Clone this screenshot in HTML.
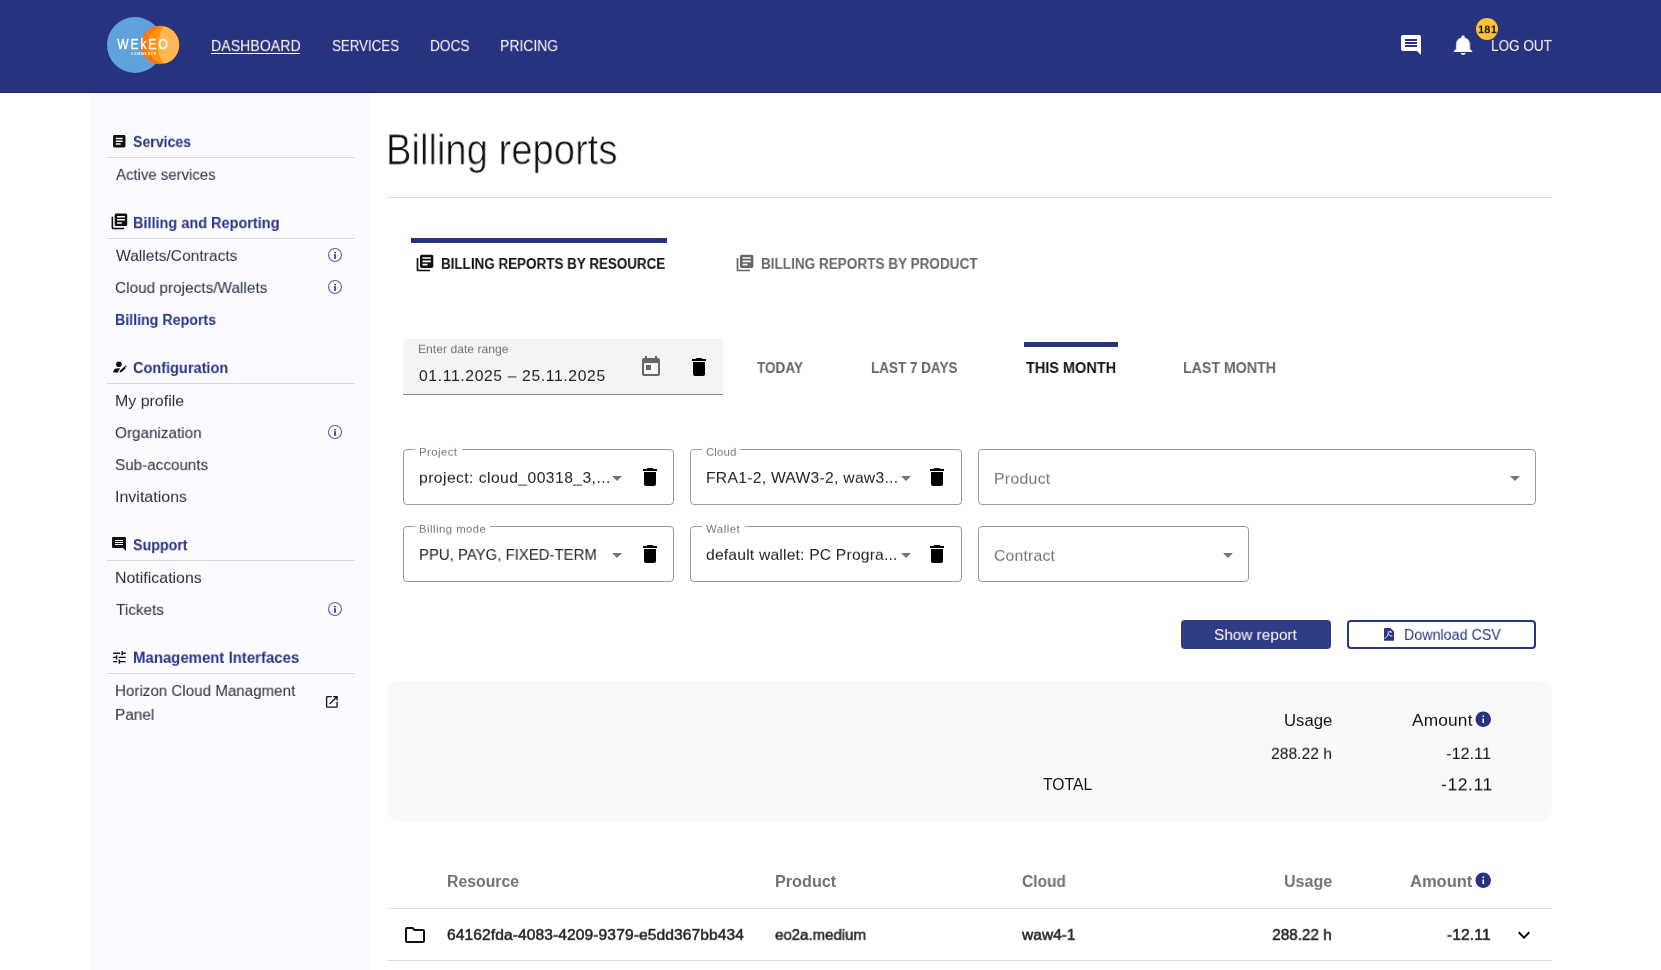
<!DOCTYPE html>
<html><head><meta charset="utf-8"><title>Billing reports</title>
<style>
html,body{margin:0;padding:0;}
body{width:1661px;height:970px;position:relative;overflow:hidden;background:#fff;font-family:"Liberation Sans",sans-serif;}
.t{position:absolute;white-space:nowrap;line-height:1;will-change:transform;}
svg{display:block;will-change:transform;}
</style></head><body>
<div style="position:absolute;left:0px;top:0px;width:1661px;height:92px;background:#27337f;"></div>
<div style="position:absolute;left:0px;top:92px;width:1661px;height:1px;background:#1c2575;"></div>
<svg style="position:absolute;left:100px;top:10px" width="90" height="70" viewBox="0 0 90 70"><defs><clipPath id="oc"><circle cx="60" cy="35" r="19"/></clipPath><linearGradient id="og" x1="0" x2="1" y1="0" y2="0"><stop offset="0" stop-color="#ff8a0c"/><stop offset="1" stop-color="#ffab14"/></linearGradient></defs><circle cx="35" cy="35" r="28" fill="#5fa3dc"/><circle cx="60" cy="35" r="19.3" fill="#ff760f"/><g clip-path="url(#oc)"><circle cx="65" cy="35" r="18.5" fill="url(#og)"/><ellipse cx="74.5" cy="35" rx="17" ry="23" fill="#ffb655"/></g><text transform="translate(43.6,39.4) scale(0.8,1)" text-anchor="middle" font-family="Liberation Sans" font-size="15" fill="#fff" stroke="#fff" stroke-width="0.3" letter-spacing="2.5">WEkEO</text><text x="44" y="45.2" text-anchor="middle" font-family="Liberation Sans" font-weight="700" font-size="3.2" fill="#fff" letter-spacing="0.9">COMMERCE</text></svg>
<div class="t" style="left:210.57px;transform-origin:0 13.00px;top:38.00px;font-size:15.60px;color:#fff;transform:translateY(0.100px) scale(0.9084,0.9333);">DASHBOARD</div>
<div class="t" style="left:332.14px;transform-origin:0 13.00px;top:38.00px;font-size:15.60px;color:#fff;transform:translateY(0.100px) scale(0.8525,0.9333);">SERVICES</div>
<div class="t" style="left:430.31px;transform-origin:0 13.00px;top:38.00px;font-size:15.60px;color:#fff;transform:translateY(0.100px) scale(0.8733,0.9333);">DOCS</div>
<div class="t" style="left:500.38px;transform-origin:0 13.00px;top:38.00px;font-size:15.60px;color:#fff;transform:translateY(0.100px) scale(0.8952,0.9333);">PRICING</div>
<div style="position:absolute;left:211px;top:53px;width:89px;height:1px;background:#fff;"></div>
<svg style="position:absolute;left:1398.6px;top:33px;" width="24" height="24" viewBox="0 0 24 24"><path fill="#fff" d="M21.99 4c0-1.1-.89-2-1.99-2H4c-1.1 0-2 .9-2 2v12c0 1.1.9 2 2 2h14l4 4-.01-18zM18 14H6v-2h12v2zm0-3H6V9h12v2zm0-3H6V6h12v2z"/></svg>
<svg style="position:absolute;left:1451px;top:32.5px;transform:scaleX(1.15);transform-origin:50% 50%;" width="24" height="24" viewBox="0 0 24 24"><path fill="#fff" d="M12 22c1.1 0 2-.9 2-2h-4c0 1.1.89 2 2 2zm6-6v-5c0-3.07-1.64-5.64-4.5-6.32V4c0-.83-.67-1.5-1.5-1.5s-1.5.67-1.5 1.5v.68C7.63 5.36 6 7.92 6 11v5l-2 2v1h16v-1l-2-2z"/></svg>
<div style="position:absolute;left:1476px;top:18px;width:22px;height:22px;border-radius:50%;background:#fcc335;"></div>
<div class="t" style="left:1478.14px;transform-origin:0 9.00px;top:24.00px;font-size:11.05px;font-weight:700;color:#111;transform:translateY(0.200px) scale(1.0000,0.9500);letter-spacing:0.171px;">181</div>
<div class="t" style="left:1491.12px;transform-origin:0 13.00px;top:37.00px;font-size:15.60px;color:#fff;transform:translateY(0.900px) scale(0.8668,0.9167);">LOG OUT</div>
<div style="position:absolute;left:91px;top:94px;width:280px;height:876px;background:#fafaff;"></div>
<svg style="position:absolute;left:110.7px;top:132.7px;" width="16.5" height="16.5" viewBox="0 0 24 24"><path fill="#111" d="M19 3H5c-1.1 0-2 .9-2 2v14c0 1.1.9 2 2 2h14c1.1 0 2-.9 2-2V5c0-1.1-.9-2-2-2zm-5 14H7v-2h7v2zm3-4H7v-2h10v2zm0-4H7V7h10v2z"/></svg>
<div class="t" style="left:133.38px;transform-origin:0 13.00px;top:134.00px;font-size:15.60px;font-weight:700;color:#283583;transform:translateY(0.100px) scale(0.9044,0.9417);">Services</div>
<div style="position:absolute;left:107px;top:157px;width:248px;height:1px;background:#d9d9e0;"></div>
<div class="t" style="left:116.00px;transform-origin:0 13.00px;top:166.00px;font-size:15.60px;color:#2b3140;transform:translateY(0.900px) scale(0.9572,0.9250);">Active services</div>
<svg style="position:absolute;left:109.5px;top:212.4px;" width="18.8" height="18.8" viewBox="0 0 24 24"><path fill="#111" d="M4 6H2v14c0 1.1.9 2 2 2h14v-2H4V6zm16-4H8c-1.1 0-2 .9-2 2v12c0 1.1.9 2 2 2h12c1.1 0 2-.9 2-2V4c0-1.1-.9-2-2-2zm-1 9H9V9h10v2zm-4 4H9v-2h6v2zm4-8H9V5h10v2z"/></svg>
<div class="t" style="left:132.79px;transform-origin:0 13.00px;top:215.00px;font-size:15.60px;font-weight:700;color:#283583;transform:translateY(0.200px) scale(0.9291,0.9417);">Billing and Reporting</div>
<div style="position:absolute;left:107px;top:238px;width:248px;height:1px;background:#d9d9e0;"></div>
<div class="t" style="left:115.84px;transform-origin:0 13.00px;top:248.00px;font-size:15.60px;color:#2b3140;transform:translateY(0.000px) scale(0.9983,0.9250);">Wallets/Contracts</div>
<svg style="position:absolute;left:327px;top:247px" width="16" height="16" viewBox="0 0 16 16"><circle cx="8" cy="8" r="6.5" fill="none" stroke="#5762a6" stroke-width="1.05"/><rect x="7" y="7.2" width="2" height="4.6" fill="#4b579c"/><rect x="7" y="5" width="2" height="1.4" fill="#4b579c"/></svg>
<div class="t" style="left:115.23px;transform-origin:0 13.00px;top:280.00px;font-size:15.60px;color:#2b3140;transform:translateY(0.000px) scale(0.9857,0.9250);">Cloud projects/Wallets</div>
<svg style="position:absolute;left:327px;top:279px" width="16" height="16" viewBox="0 0 16 16"><circle cx="8" cy="8" r="6.5" fill="none" stroke="#5762a6" stroke-width="1.05"/><rect x="7" y="7.2" width="2" height="4.6" fill="#4b579c"/><rect x="7" y="5" width="2" height="1.4" fill="#4b579c"/></svg>
<div class="t" style="left:115.00px;transform-origin:0 13.00px;top:312.00px;font-size:15.60px;font-weight:700;color:#283583;transform:translateY(0.000px) scale(0.9112,0.9250);">Billing Reports</div>
<svg style="position:absolute;left:112px;top:360px" width="16" height="14" viewBox="0 0 16 14"><circle cx="6.9" cy="4.2" r="2.8" fill="#111"/><path d="M3.6 8.4 L8.1 8.2 L5.7 12.5 L1.6 12.5 Q0.9 12.5 1.2 11.6 Q2 9 3.6 8.4Z" fill="#111"/><path d="M7.4 12.6 L8.2 10.4 L12.4 6.4 L13.9 7.9 L9.7 11.9 Z" fill="#111"/><path d="M12.9 5.9 L13.8 5.3 L14.6 6.2 L14.3 7.4 Z" fill="#111"/></svg>
<div class="t" style="left:133.22px;transform-origin:0 13.00px;top:360.00px;font-size:15.60px;font-weight:700;color:#283583;transform:translateY(0.100px) scale(0.9312,0.9417);">Configuration</div>
<div style="position:absolute;left:107px;top:383px;width:248px;height:1px;background:#d9d9e0;"></div>
<div class="t" style="left:114.72px;transform-origin:0 13.00px;top:393.00px;font-size:15.95px;color:#2b3140;transform:translateY(0.100px) scale(1.0000,0.9250);">My profile</div>
<div class="t" style="left:115.24px;transform-origin:0 13.00px;top:425.00px;font-size:15.60px;color:#2b3140;transform:translateY(0.100px) scale(0.9800,0.9250);">Organization</div>
<svg style="position:absolute;left:327px;top:424px" width="16" height="16" viewBox="0 0 16 16"><circle cx="8" cy="8" r="6.5" fill="none" stroke="#5762a6" stroke-width="1.05"/><rect x="7" y="7.2" width="2" height="4.6" fill="#4b579c"/><rect x="7" y="5" width="2" height="1.4" fill="#4b579c"/></svg>
<div class="t" style="left:115.24px;transform-origin:0 13.00px;top:457.00px;font-size:15.60px;color:#2b3140;transform:translateY(0.100px) scale(0.9770,0.9250);">Sub-accounts</div>
<div class="t" style="left:114.56px;transform-origin:0 13.00px;top:489.00px;font-size:16.00px;color:#2b3140;transform:translateY(0.000px) scale(0.9989,0.9250);">Invitations</div>
<svg style="position:absolute;left:112px;top:537px" width="14" height="14" viewBox="0 0 14 14"><path d="M1.2 0H12.8Q14 0 14 1.2V14L11 11H1.2Q0 11 0 9.8V1.2Q0 0 1.2 0Z" fill="#111"/><rect x="3" y="3" width="8" height="1" fill="#fafaff"/><rect x="3" y="5" width="8" height="1" fill="#fafaff"/><rect x="3" y="7" width="8" height="1" fill="#fafaff"/></svg>
<div class="t" style="left:133.37px;transform-origin:0 13.00px;top:537.00px;font-size:15.60px;font-weight:700;color:#283583;transform:translateY(0.300px) scale(0.9133,0.9417);">Support</div>
<div style="position:absolute;left:107px;top:560px;width:248px;height:1px;background:#d9d9e0;"></div>
<div class="t" style="left:114.72px;transform-origin:0 13.00px;top:570.00px;font-size:15.95px;color:#2b3140;transform:translateY(0.000px) scale(0.9998,0.9250);">Notifications</div>
<div class="t" style="left:115.69px;transform-origin:0 13.00px;top:602.00px;font-size:15.60px;color:#2b3140;transform:translateY(0.000px) scale(0.9814,0.9250);">Tickets</div>
<svg style="position:absolute;left:327px;top:601px" width="16" height="16" viewBox="0 0 16 16"><circle cx="8" cy="8" r="6.5" fill="none" stroke="#5762a6" stroke-width="1.05"/><rect x="7" y="7.2" width="2" height="4.6" fill="#4b579c"/><rect x="7" y="5" width="2" height="1.4" fill="#4b579c"/></svg>
<svg style="position:absolute;left:110.5px;top:648.7px;" width="16.8" height="16.8" viewBox="0 0 24 24"><path fill="#111" d="M3 17v2h6v-2H3zM3 5v2h10V5H3zm10 16v-2h8v-2h-8v-2h-2v6h2zM7 9v2H3v2h4v2h2V9H7zm14 4v-2H11v2h10zm-6-4h2V7h4V5h-4V3h-2v6z"/></svg>
<div class="t" style="left:132.75px;transform-origin:0 13.00px;top:649.00px;font-size:15.60px;font-weight:700;color:#283583;transform:translateY(0.900px) scale(0.9586,0.9417);">Management Interfaces</div>
<div style="position:absolute;left:107px;top:673px;width:248px;height:1px;background:#d9d9e0;"></div>
<div class="t" style="left:114.79px;transform-origin:0 13.00px;top:683.00px;font-size:15.60px;color:#2b3140;transform:translateY(0.000px) scale(0.9716,0.9250);">Horizon Cloud Managment</div>
<div class="t" style="left:114.77px;transform-origin:0 13.00px;top:706.00px;font-size:15.60px;color:#2b3140;transform:translateY(0.900px) scale(0.9841,0.9250);">Panel</div>
<svg style="position:absolute;left:324.0px;top:693.9px;" width="15.7" height="15.7" viewBox="0 0 24 24"><path fill="#111" d="M19 19H5V5h7V3H5c-1.11 0-2 .9-2 2v14c0 1.1.89 2 2 2h14c1.1 0 2-.9 2-2v-7h-2v7zM14 3v2h3.59l-9.83 9.83 1.41 1.41L19 6.41V10h2V3h-7z"/></svg>
<div class="t" style="left:386.44px;transform-origin:0 36.00px;top:128.00px;font-size:43.45px;color:#111;transform:translateY(0.400px) scale(0.8795,0.9677);-webkit-text-stroke:0.7px #fff;">Billing reports</div>
<div style="position:absolute;left:387px;top:197px;width:1165px;height:1px;background:#dcdcdc;"></div>
<div style="position:absolute;left:411px;top:238px;width:256px;height:5px;background:#27337f;"></div>
<svg style="position:absolute;left:414.6px;top:252.6px;" width="20" height="20" viewBox="0 0 24 24"><path fill="#111" d="M4 6H2v14c0 1.1.9 2 2 2h14v-2H4V6zm16-4H8c-1.1 0-2 .9-2 2v12c0 1.1.9 2 2 2h12c1.1 0 2-.9 2-2V4c0-1.1-.9-2-2-2zm-1 9H9V9h10v2zm-4 4H9v-2h6v2zm4-8H9V5h10v2z"/></svg>
<div class="t" style="left:440.96px;transform-origin:0 13.00px;top:255.00px;font-size:15.60px;font-weight:700;color:#111;transform:translateY(0.800px) scale(0.8611,0.9000);">BILLING REPORTS BY RESOURCE</div>
<svg style="position:absolute;left:734.8px;top:252.8px;" width="20" height="20" viewBox="0 0 24 24"><path fill="#666" d="M4 6H2v14c0 1.1.9 2 2 2h14v-2H4V6zm16-4H8c-1.1 0-2 .9-2 2v12c0 1.1.9 2 2 2h12c1.1 0 2-.9 2-2V4c0-1.1-.9-2-2-2zm-1 9H9V9h10v2zm-4 4H9v-2h6v2zm4-8H9V5h10v2z"/></svg>
<div class="t" style="left:761.25px;transform-origin:0 13.00px;top:255.00px;font-size:15.60px;font-weight:700;color:#666;transform:translateY(0.800px) scale(0.8688,0.9000);">BILLING REPORTS BY PRODUCT</div>
<div style="position:absolute;left:403px;top:339px;width:320px;height:56px;background:#f4f4f4;border-radius:4px 4px 0 0;"></div>
<div style="position:absolute;left:403px;top:394px;width:320px;height:1px;background:#8d8d8d;"></div>
<div class="t" style="left:418.23px;transform-origin:0 10.00px;top:343.00px;font-size:12.15px;color:#757575;transform:translateY(0.100px) scale(1.0000,0.9333);">Enter date range</div>
<div class="t" style="left:418.77px;transform-origin:0 13.00px;top:367.00px;font-size:15.70px;color:#222;transform:translateY(0.900px) scale(1.0000,0.9000);letter-spacing:0.638px;">01.11.2025 – 25.11.2025</div>
<svg style="position:absolute;left:638.7px;top:355px;" width="24" height="24" viewBox="0 0 24 24"><path fill="#666" d="M19 3h-1V1h-2v2H8V1H6v2H5c-1.11 0-1.99.9-1.99 2L3 19c0 1.1.89 2 2 2h14c1.1 0 2-.9 2-2V5c0-1.1-.9-2-2-2zm0 16H5V8h14v11zM7 10h5v5H7z"/></svg>
<svg style="position:absolute;left:687px;top:355px;" width="24" height="24" viewBox="0 0 24 24"><path fill="#000" d="M6 19c0 1.1.9 2 2 2h8c1.1 0 2-.9 2-2V7H6v12zM19 4h-3.5l-1-1h-5l-1 1H5v2h14V4z"/></svg>
<div class="t" style="left:757.06px;transform-origin:0 13.00px;top:359.00px;font-size:15.60px;font-weight:700;color:#666;transform:translateY(0.900px) scale(0.8681,0.9000);">TODAY</div>
<div class="t" style="left:870.96px;transform-origin:0 13.00px;top:359.00px;font-size:15.60px;font-weight:700;color:#666;transform:translateY(0.900px) scale(0.8649,0.9000);">LAST 7 DAYS</div>
<div style="position:absolute;left:1024px;top:342px;width:94px;height:5px;background:#27337f;"></div>
<div class="t" style="left:1025.66px;transform-origin:0 13.00px;top:359.00px;font-size:15.60px;font-weight:700;color:#111;transform:translateY(0.900px) scale(0.9292,0.9000);">THIS MONTH</div>
<div class="t" style="left:1182.71px;transform-origin:0 13.00px;top:359.00px;font-size:15.60px;font-weight:700;color:#666;transform:translateY(0.900px) scale(0.9086,0.9000);">LAST MONTH</div>
<div style="position:absolute;left:403px;top:449px;width:269px;height:54px;border:1px solid #9a9a9a;border-radius:4px;"></div>
<div style="position:absolute;left:415px;top:447px;width:47px;height:5px;background:#fff;"></div>
<div class="t" style="left:418.89px;transform-origin:0 9.00px;top:446.00px;font-size:11.35px;color:#757575;transform:translateY(0.700px) scale(1.0000,0.9750);letter-spacing:0.452px;">Project</div>
<div class="t" style="left:418.90px;transform-origin:0 13.00px;top:469.00px;font-size:15.70px;color:#222;transform:translateY(0.800px) scale(1.0000,0.9000);letter-spacing:0.432px;">project: cloud_00318_3,...</div>
<svg style="position:absolute;left:605px;top:465.5px;" width="24" height="24" viewBox="0 0 24 24"><path fill="#757575" d="M7 10l5 5 5-5z"/></svg>
<svg style="position:absolute;left:638.2px;top:464.5px;" width="24" height="24" viewBox="0 0 24 24"><path fill="#000" d="M6 19c0 1.1.9 2 2 2h8c1.1 0 2-.9 2-2V7H6v12zM19 4h-3.5l-1-1h-5l-1 1H5v2h14V4z"/></svg>
<div style="position:absolute;left:690px;top:449px;width:270px;height:54px;border:1px solid #9a9a9a;border-radius:4px;"></div>
<div style="position:absolute;left:702px;top:447px;width:38px;height:5px;background:#fff;"></div>
<div class="t" style="left:706.03px;transform-origin:0 9.00px;top:446.00px;font-size:11.35px;color:#757575;transform:translateY(0.700px) scale(1.0000,0.9750);letter-spacing:0.156px;">Cloud</div>
<div class="t" style="left:705.54px;transform-origin:0 13.00px;top:469.00px;font-size:15.70px;color:#222;transform:translateY(0.800px) scale(1.0000,0.9000);letter-spacing:0.264px;">FRA1-2, WAW3-2, waw3...</div>
<svg style="position:absolute;left:893.5px;top:465.5px;" width="24" height="24" viewBox="0 0 24 24"><path fill="#757575" d="M7 10l5 5 5-5z"/></svg>
<svg style="position:absolute;left:925.2px;top:464.5px;" width="24" height="24" viewBox="0 0 24 24"><path fill="#000" d="M6 19c0 1.1.9 2 2 2h8c1.1 0 2-.9 2-2V7H6v12zM19 4h-3.5l-1-1h-5l-1 1H5v2h14V4z"/></svg>
<div style="position:absolute;left:978px;top:449px;width:556px;height:54px;border:1px solid #9a9a9a;border-radius:4px;"></div>
<div class="t" style="left:993.63px;transform-origin:0 13.00px;top:470.00px;font-size:15.85px;color:#757575;transform:translateY(0.800px) scale(1.0000,0.9083);letter-spacing:0.274px;">Product</div>
<svg style="position:absolute;left:1503px;top:465.5px;" width="24" height="24" viewBox="0 0 24 24"><path fill="#757575" d="M7 10l5 5 5-5z"/></svg>
<div style="position:absolute;left:403px;top:526px;width:269px;height:54px;border:1px solid #9a9a9a;border-radius:4px;"></div>
<div style="position:absolute;left:415px;top:524px;width:75px;height:5px;background:#fff;"></div>
<div class="t" style="left:418.89px;transform-origin:0 9.00px;top:523.00px;font-size:11.35px;color:#757575;transform:translateY(0.700px) scale(1.0000,0.9750);letter-spacing:0.465px;">Billing mode</div>
<div class="t" style="left:418.81px;transform-origin:0 13.00px;top:546.00px;font-size:15.60px;color:#222;transform:translateY(0.800px) scale(0.9574,0.9000);">PPU, PAYG, FIXED-TERM</div>
<svg style="position:absolute;left:605px;top:542.5px;" width="24" height="24" viewBox="0 0 24 24"><path fill="#757575" d="M7 10l5 5 5-5z"/></svg>
<svg style="position:absolute;left:638.2px;top:541.5px;" width="24" height="24" viewBox="0 0 24 24"><path fill="#000" d="M6 19c0 1.1.9 2 2 2h8c1.1 0 2-.9 2-2V7H6v12zM19 4h-3.5l-1-1h-5l-1 1H5v2h14V4z"/></svg>
<div style="position:absolute;left:690px;top:526px;width:270px;height:54px;border:1px solid #9a9a9a;border-radius:4px;"></div>
<div style="position:absolute;left:702px;top:524px;width:43px;height:5px;background:#fff;"></div>
<div class="t" style="left:706.49px;transform-origin:0 9.00px;top:523.00px;font-size:11.35px;color:#757575;transform:translateY(0.700px) scale(1.0000,0.9750);letter-spacing:0.526px;">Wallet</div>
<div class="t" style="left:706.17px;transform-origin:0 13.00px;top:546.00px;font-size:15.70px;color:#222;transform:translateY(0.800px) scale(1.0000,0.9000);letter-spacing:0.180px;">default wallet: PC Progra...</div>
<svg style="position:absolute;left:893.5px;top:542.5px;" width="24" height="24" viewBox="0 0 24 24"><path fill="#757575" d="M7 10l5 5 5-5z"/></svg>
<svg style="position:absolute;left:925.2px;top:541.5px;" width="24" height="24" viewBox="0 0 24 24"><path fill="#000" d="M6 19c0 1.1.9 2 2 2h8c1.1 0 2-.9 2-2V7H6v12zM19 4h-3.5l-1-1h-5l-1 1H5v2h14V4z"/></svg>
<div style="position:absolute;left:978px;top:526px;width:269px;height:54px;border:1px solid #9a9a9a;border-radius:4px;"></div>
<div class="t" style="left:994.11px;transform-origin:0 13.00px;top:547.00px;font-size:15.85px;color:#757575;transform:translateY(0.800px) scale(1.0000,0.9083);letter-spacing:0.148px;">Contract</div>
<svg style="position:absolute;left:1216px;top:542.5px;" width="24" height="24" viewBox="0 0 24 24"><path fill="#757575" d="M7 10l5 5 5-5z"/></svg>
<div style="position:absolute;left:1181px;top:620px;width:150px;height:29px;background:#2f3b85;border-radius:4px;"></div>
<div class="t" style="left:1214.13px;transform-origin:0 13.00px;top:627.00px;font-size:15.60px;color:#fff;transform:translateY(0.000px) scale(0.9843,0.9083);">Show report</div>
<div style="position:absolute;left:1347px;top:620px;width:185px;height:25px;border:2px solid #283583;border-radius:4px;"></div>
<svg style="position:absolute;left:1383.5px;top:628px" width="10.2" height="12.7" viewBox="0 0 10.2 12.7"><path d="M0.7 0H6.4L10.2 3.8V12Q10.2 12.7 9.5 12.7H0.7Q0 12.7 0 12V0.7Q0 0 0.7 0Z" fill="#283583"/><path d="M6 2.2L5.3 4.4H8.3Z" fill="#fff"/><path d="M0.5 10.4C2.6 9.6 3.8 7.8 4.2 5.8 4.4 4.8 4.3 3.9 4.2 3.2M4.6 6.6C5.6 7.6 7 8.1 8.4 8.2" fill="none" stroke="#f4f5fa" stroke-width="1.0"/></svg>
<div class="t" style="left:1404.46px;transform-origin:0 13.00px;top:626.00px;font-size:15.60px;color:#283583;transform:translateY(0.900px) scale(0.9156,0.9167);">Download CSV</div>
<div style="position:absolute;left:387px;top:681px;width:1165px;height:140px;background:#f8f9fb;border-radius:12px;"></div>
<div class="t" style="right:328.71px;transform-origin:100% 13.00px;top:713.00px;font-size:16.70px;color:#111;transform:translateY(0.000px) scale(1.0000,0.9917);letter-spacing:0.010px;">Usage</div>
<div class="t" style="right:188.61px;transform-origin:100% 14.00px;top:711.00px;font-size:17.30px;color:#111;transform:translateY(0.800px) scale(1.0000,0.9917);letter-spacing:0.178px;">Amount</div>
<svg style="position:absolute;left:1473.8px;top:709.8px;" width="18.5" height="18.5" viewBox="0 0 24 24"><path fill="#27337f" d="M12 2C6.48 2 2 6.48 2 12s4.48 10 10 10 10-4.48 10-10S17.52 2 12 2zm1 15h-2v-6h2v6zm0-8h-2V7h2v2z"/></svg>
<div class="t" style="right:328.82px;transform-origin:100% 13.00px;top:745.00px;font-size:15.65px;color:#111;transform:translateY(0.900px) scale(0.9990,0.9333);">288.22 h</div>
<div class="t" style="right:169.97px;transform-origin:100% 14.00px;top:744.00px;font-size:16.30px;color:#111;transform:translateY(0.900px) scale(0.9995,0.9333);">-12.11</div>
<div class="t" style="left:1043.29px;transform-origin:0 13.00px;top:776.00px;font-size:15.70px;color:#111;transform:translateY(0.900px) scale(1.0000,1.0000);letter-spacing:0.011px;">TOTAL</div>
<div class="t" style="right:168.58px;transform-origin:100% 14.00px;top:776.00px;font-size:17.60px;color:#111;transform:translateY(0.400px) scale(1.0000,0.9308);letter-spacing:0.522px;">-12.11</div>
<div class="t" style="left:447.00px;transform-origin:0 13.00px;top:873.00px;font-size:15.80px;font-weight:700;color:#727272;transform:translateY(0.900px) scale(0.9984,1.0000);">Resource</div>
<div class="t" style="left:774.87px;transform-origin:0 14.00px;top:872.00px;font-size:16.20px;font-weight:700;color:#727272;transform:translateY(0.900px) scale(1.0000,1.0000);letter-spacing:0.010px;">Product</div>
<div class="t" style="left:1021.88px;transform-origin:0 13.00px;top:873.00px;font-size:15.70px;font-weight:700;color:#727272;transform:translateY(0.900px) scale(0.9892,1.0000);">Cloud</div>
<div class="t" style="right:329.29px;transform-origin:100% 14.00px;top:872.00px;font-size:16.05px;font-weight:700;color:#727272;transform:translateY(0.900px) scale(0.9999,1.0000);">Usage</div>
<div class="t" style="right:189.09px;transform-origin:100% 14.00px;top:872.00px;font-size:16.50px;font-weight:700;color:#727272;transform:translateY(0.900px) scale(0.9998,1.0000);">Amount</div>
<svg style="position:absolute;left:1473.8px;top:870.7px;" width="18.5" height="18.5" viewBox="0 0 24 24"><path fill="#27337f" d="M12 2C6.48 2 2 6.48 2 12s4.48 10 10 10 10-4.48 10-10S17.52 2 12 2zm1 15h-2v-6h2v6zm0-8h-2V7h2v2z"/></svg>
<div style="position:absolute;left:387px;top:908px;width:1165px;height:1px;background:#dedede;"></div>
<svg style="position:absolute;left:402.7px;top:922.5px;" width="24" height="24" viewBox="0 0 24 24"><path fill="#111" d="M9.17 6l2 2H20v10H4V6h5.17M10 4H4c-1.1 0-1.99.9-1.99 2L2 18c0 1.1.9 2 2 2h16c1.1 0 2-.9 2-2V8c0-1.1-.9-2-2-2h-8l-2-2z"/></svg>
<div class="t" style="left:446.62px;transform-origin:0 13.00px;top:926.00px;font-size:15.60px;-webkit-text-stroke:0.5px #222;color:#222;transform:translateY(0.800px) scale(1.0000,0.8917);letter-spacing:0.085px;">64162fda-4083-4209-9379-e5dd367bb434</div>
<div class="t" style="left:774.80px;transform-origin:0 13.00px;top:926.00px;font-size:15.60px;-webkit-text-stroke:0.5px #222;color:#222;transform:translateY(0.800px) scale(0.9632,0.8917);">eo2a.medium</div>
<div class="t" style="left:1022.00px;transform-origin:0 13.00px;top:926.00px;font-size:15.60px;-webkit-text-stroke:0.5px #222;color:#222;transform:translateY(0.800px) scale(0.9955,0.8917);">waw4-1</div>
<div class="t" style="right:328.84px;transform-origin:100% 13.00px;top:926.00px;font-size:15.60px;-webkit-text-stroke:0.5px #222;color:#222;transform:translateY(0.900px) scale(0.9802,0.9083);">288.22 h</div>
<div class="t" style="right:170.29px;transform-origin:100% 13.00px;top:926.00px;font-size:15.60px;-webkit-text-stroke:0.5px #222;color:#222;transform:translateY(0.800px) scale(1.0000,0.8917);letter-spacing:0.110px;">-12.11</div>
<svg style="position:absolute;left:1512px;top:923.1px;" width="24" height="24" viewBox="0 0 24 24"><path fill="#111" d="M16.59 8.59L12 13.17 7.41 8.59 6 10l6 6 6-6z"/></svg>
<div style="position:absolute;left:387px;top:960px;width:1165px;height:1px;background:#dedede;"></div>
</body></html>
